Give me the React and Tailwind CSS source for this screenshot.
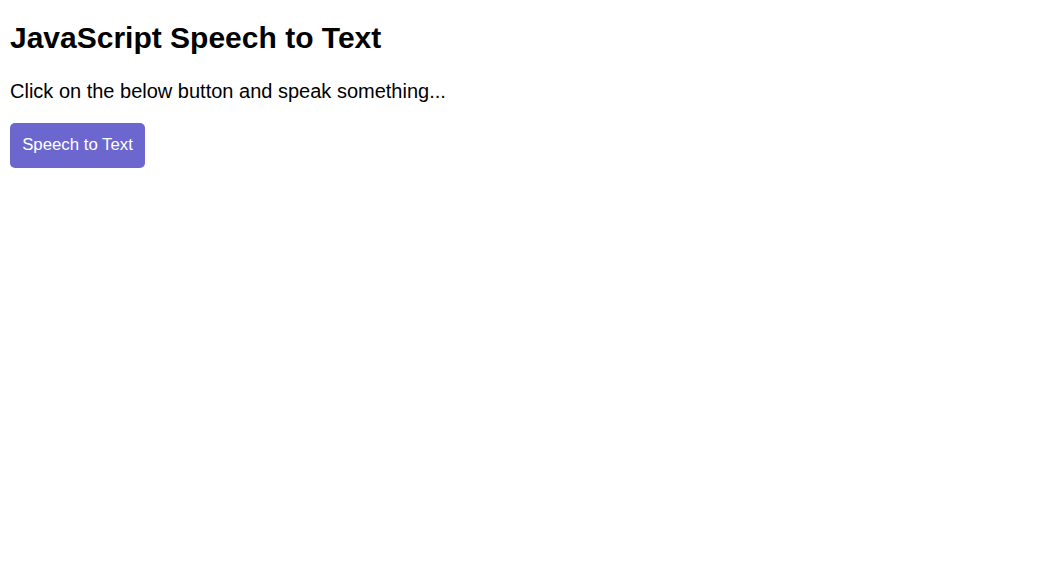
export default function App() {
  return (
    <div className="p-[10px] bg-white min-h-screen text-black" style={{ fontFamily: '"Liberation Sans", Arial, sans-serif' }}>
      <h1 className="text-[30px] font-bold leading-[34px] mt-[11px]">JavaScript Speech to Text</h1>
      <p className="text-[20px] leading-[23px] mt-[25px]">Click on the below button and speak something...</p>
      <button className="mt-[20px] h-[45px] w-[135px] pb-[2px] rounded-[5px] bg-[#6c67cf] text-white text-[16.8px] leading-[20px]">Speech to Text</button>
    </div>
  );
}
